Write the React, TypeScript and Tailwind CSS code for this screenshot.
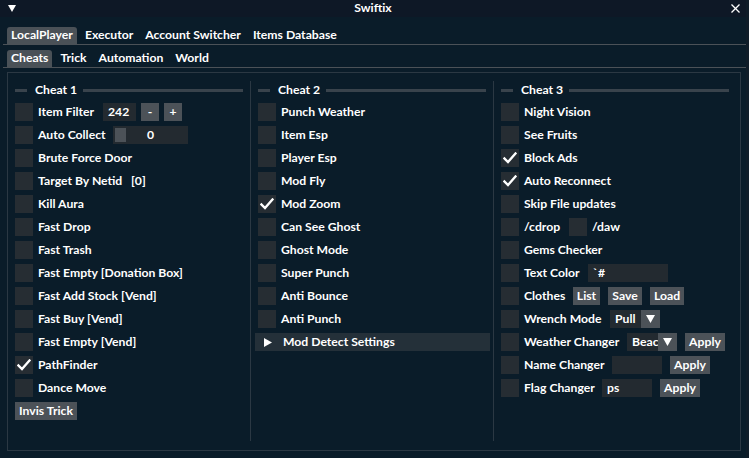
import React from "react";

const FONT = { fontFamily: 'Lato, "Open Sans", sans-serif' };

function Check({ on = false }: { on?: boolean }) {
  return (
    <div className="w-[18px] h-[18px] bg-[#262d33] shrink-0 flex items-center justify-center">
      {on && (
        <svg width="14" height="12" viewBox="0 0 14 12">
          <polyline points="1.5,6.5 5,10 12.5,1.5" fill="none" stroke="#ffffff" strokeWidth="2.4" strokeLinecap="square" />
        </svg>
      )}
    </div>
  );
}

function Row({ children }: { children: React.ReactNode }) {
  return <div className="flex items-center h-[18px] shrink-0">{children}</div>;
}

function Label({ w, children }: { w?: number; children: React.ReactNode }) {
  return (
    <span
      className="ml-[5px] whitespace-nowrap shrink-0 leading-none"
      style={w ? { width: w } : undefined}
    >
      {children}
    </span>
  );
}

function Btn({ w, children, className = "" }: { w: number; children: React.ReactNode; className?: string }) {
  return (
    <div
      className={"h-[18px] bg-[#4c5258] flex items-center justify-center shrink-0 leading-none " + className}
      style={{ width: w }}
    >
      {children}
    </div>
  );
}

function Input({ w, children, className = "" }: { w: number; children?: React.ReactNode; className?: string }) {
  return (
    <div
      className={"h-[18px] bg-[#232a30] flex items-center pl-[5px] shrink-0 overflow-hidden whitespace-nowrap leading-none " + className}
      style={{ width: w }}
    >
      {children}
    </div>
  );
}

function Arrow() {
  return (
    <svg width="9" height="8" viewBox="0 0 9 8">
      <polygon points="0,0 9,0 4.5,8" fill="#ffffff" />
    </svg>
  );
}

function Header({ title }: { title: string }) {
  return (
    <div className="flex items-center h-[18px] w-[228px] shrink-0">
      <div className="w-[12px] h-[3px] bg-[#39434c]" />
      <span className="ml-[8px] mr-[6px] leading-none">{title}</span>
      <div className="flex-1 h-[3px] bg-[#39434c]" />
    </div>
  );
}

function CB({ label, on }: { label: string; on?: boolean }) {
  return (
    <Row>
      <Check on={on} />
      <Label>{label}</Label>
    </Row>
  );
}

export default function App() {
  return (
    <div
      className="w-[749px] h-[458px] bg-[#0a1c29] text-white text-[12.2px] font-bold flex flex-col overflow-hidden border-r-[3px] border-[#0f1c28]"
      style={FONT}
    >
      {/* title bar */}
      <div className="h-[17px] bg-[#0e1826] flex items-center justify-between pl-[8px] pr-[6px] shrink-0 relative">
        <svg width="8" height="7" viewBox="0 0 8 7">
          <polygon points="0,0 8,0 4,7" fill="#ffffff" />
        </svg>
        <span className="absolute left-0 right-0 text-center leading-none">Swiftix</span>
        <svg width="9" height="9" viewBox="0 0 9 9">
          <line x1="0.5" y1="0.5" x2="8.5" y2="8.5" stroke="#fff" strokeWidth="1.3" />
          <line x1="8.5" y1="0.5" x2="0.5" y2="8.5" stroke="#fff" strokeWidth="1.3" />
        </svg>
      </div>

      {/* tab row 1 */}
      <div className="mt-[10px] ml-[3px] w-[743px] h-[18px] flex items-end border-b border-[#4b5157] shrink-0">
        <div className="ml-[4px] flex gap-[4px] h-[17px]">
          <div className="bg-[#4a5157] rounded-t-[3px] px-[4px] flex items-center leading-none">LocalPlayer</div>
          <div className="px-[4px] flex items-center leading-none">Executor</div>
          <div className="px-[4px] flex items-center leading-none">Account Switcher</div>
          <div className="px-[4px] flex items-center leading-none">Items Database</div>
        </div>
      </div>

      {/* tab row 2 */}
      <div className="mt-[5px] ml-[3px] w-[743px] h-[18px] flex items-end border-b border-[#4b5157] shrink-0">
        <div className="ml-[4px] flex gap-[4px] h-[17px]">
          <div className="bg-[#4a5157] rounded-t-[3px] px-[4px] flex items-center leading-none">Cheats</div>
          <div className="px-[4px] flex items-center leading-none">Trick</div>
          <div className="px-[4px] flex items-center leading-none">Automation</div>
          <div className="px-[4px] flex items-center leading-none">World</div>
        </div>
      </div>

      {/* panel */}
      <div className="mt-[4px] ml-[7px] w-[734px] h-[379px] border border-[#2b3843] pt-[8px] pb-[9px] flex shrink-0">
        {/* column 1 */}
        <div className="w-[242px] pl-[7px] flex flex-col gap-[5px]">
          <div className="mb-[-1px]"><Header title="Cheat 1" /></div>
          <Row>
            <Check />
            <Label w={65}>Item Filter</Label>
            <Input w={33}>242</Input>
            <Btn w={18} className="ml-[5px]">-</Btn>
            <Btn w={18} className="ml-[5px]">+</Btn>
          </Row>
          <Row>
            <Check />
            <Label w={75}>Auto Collect</Label>
            <div className="w-[75px] h-[18px] bg-[#232a30] relative flex items-center justify-center leading-none">
              <div className="absolute left-[2px] top-[2px] w-[11px] h-[14px] bg-[#4c5258]" />
              0
            </div>
          </Row>
          <CB label="Brute Force Door" />
          <Row>
            <Check />
            <Label w={93}>Target By Netid</Label>
            <span className="leading-none">[0]</span>
          </Row>
          <CB label="Kill Aura" />
          <CB label="Fast Drop" />
          <CB label="Fast Trash" />
          <CB label="Fast Empty [Donation Box]" />
          <CB label="Fast Add Stock [Vend]" />
          <CB label="Fast Buy [Vend]" />
          <CB label="Fast Empty [Vend]" />
          <CB label="PathFinder" on />
          <CB label="Dance Move" />
          <Row>
            <Btn w={62}>Invis Trick</Btn>
          </Row>
        </div>

        {/* column 2 */}
        <div className="w-[243px] border-l border-[#2b3843] pl-[4px] flex flex-col gap-[5px]">
          <div className="mb-[-1px] ml-[3px]"><Header title="Cheat 2" /></div>
          {["Punch Weather", "Item Esp", "Player Esp", "Mod Fly"].map((t) => (
            <div key={t} className="ml-[3px]"><CB label={t} /></div>
          ))}
          <div className="ml-[3px]"><CB label="Mod Zoom" on /></div>
          {["Can See Ghost", "Ghost Mode", "Super Punch", "Anti Bounce", "Anti Punch"].map((t) => (
            <div key={t} className="ml-[3px]"><CB label={t} /></div>
          ))}
          <div className="w-[235px] h-[18px] bg-[#243039] flex items-center pl-[9px] shrink-0">
            <svg width="8" height="9" viewBox="0 0 8 9">
              <polygon points="0,0 8,4.5 0,9" fill="#ffffff" />
            </svg>
            <span className="ml-[11px] leading-none">Mod Detect Settings</span>
          </div>
        </div>

        {/* column 3 */}
        <div className="w-[243px] border-l border-[#2b3843] pl-[7px] flex flex-col gap-[5px]">
          <div className="mb-[-1px]"><Header title="Cheat 3" /></div>
          <CB label="Night Vision" />
          <CB label="See Fruits" />
          <CB label="Block Ads" on />
          <CB label="Auto Reconnect" on />
          <CB label="Skip File updates" />
          <Row>
            <Check />
            <Label w={45}>/cdrop</Label>
            <Check />
            <Label>/daw</Label>
          </Row>
          <CB label="Gems Checker" />
          <Row>
            <Check />
            <Label w={64}>Text Color</Label>
            <Input w={80}>`#</Input>
          </Row>
          <Row>
            <Check />
            <Label w={49}>Clothes</Label>
            <Btn w={27}>List</Btn>
            <Btn w={34} className="ml-[8px]">Save</Btn>
            <Btn w={34} className="ml-[8px]">Load</Btn>
          </Row>
          <Row>
            <Check />
            <Label w={86}>Wrench Mode</Label>
            <Input w={31}>Pull</Input>
            <Btn w={19}><Arrow /></Btn>
          </Row>
          <Row>
            <Check />
            <Label w={103}>Weather Changer</Label>
            <Input w={31} className="pl-[4px]">Beac</Input>
            <Btn w={19}><Arrow /></Btn>
            <Btn w={40} className="ml-[8px]">Apply</Btn>
          </Row>
          <Row>
            <Check />
            <Label w={88}>Name Changer</Label>
            <Input w={50} />
            <Btn w={40} className="ml-[8px]">Apply</Btn>
          </Row>
          <Row>
            <Check />
            <Label w={78}>Flag Changer</Label>
            <Input w={50}>ps</Input>
            <Btn w={40} className="ml-[8px]">Apply</Btn>
          </Row>
        </div>
      </div>
    </div>
  );
}
